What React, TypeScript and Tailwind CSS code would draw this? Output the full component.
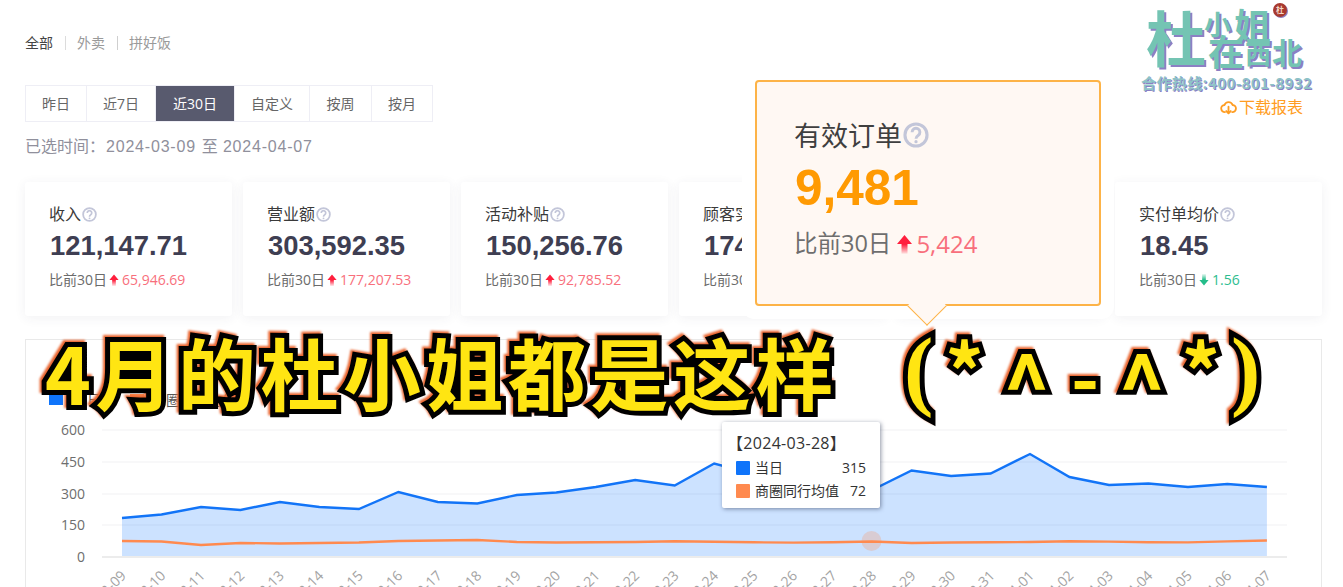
import React from "react";

const F = "font-['Open_Sans','Noto_Sans_CJK_SC',sans-serif]";

function Help({ className }: { className: string }) {
  return (
    <svg viewBox="0 0 16 16" className={className} fill="none" stroke="#c3c6d9" strokeWidth="1.9">
      <circle cx="8" cy="8" r="6.8" />
      <path d="M5.6 6.3a2.4 2.4 0 1 1 3.7 2c-.9.6-1.3 1-1.3 2" strokeWidth="1.8" />
      <circle cx="8" cy="12.1" r="1" fill="#c3c6d9" stroke="none" />
    </svg>
  );
}

function Arrow({ up, className }: { up: boolean; className: string }) {
  const id = up ? "arrowUp" : "arrowDown";
  const color = up ? "#ff1f3d" : "#25bd8a";
  return (
    <svg viewBox="0 0 10 13" className={className}>
      <defs>
        <linearGradient id={id} x1="0" y1={up ? "0" : "1"} x2="0" y2={up ? "1" : "0"}>
          <stop offset="0.5" stopColor={color} />
          <stop offset="1" stopColor={color} stopOpacity="0.1" />
        </linearGradient>
      </defs>
      <path d={up ? "M5 0.5 10 6.5H7V13H3V6.5H0Z" : "M5 12.5 10 6.5H7V0H3V6.5H0Z"} fill={`url(#${id})`} />
    </svg>
  );
}

type CardData = { title: string; value: string; diff: string; up: boolean };
const cards: CardData[] = [
  { title: "收入", value: "121,147.71", diff: "65,946.69", up: true },
  { title: "营业额", value: "303,592.35", diff: "177,207.53", up: true },
  { title: "活动补贴", value: "150,256.76", diff: "92,785.52", up: true },
  { title: "顾客实付", value: "174,335.59", diff: "84,421.01", up: true },
  { title: "有效订单", value: "9,481", diff: "5,424", up: true },
  { title: "实付单均价", value: "18.45", diff: "1.56", up: false },
];

function Card({ c }: { c: CardData }) {
  return (
    <div className="h-[134px] w-[207px] shrink-0 rounded-[3px] bg-white pl-[24px] pt-[20px] shadow-[0_2px_12px_rgba(60,60,90,0.07)]">
      <div className="flex h-[24px] items-center text-[16px] leading-none text-[#3a3a3a]">
        {c.title}
        <Help className="ml-px h-[15px] w-[15px]" />
      </div>
      <div className="ml-px mt-[2px] h-[36px] font-['Liberation_Sans',sans-serif] text-[27.4px] font-bold leading-[36px] text-[#3e3e52]">
        {c.value}
      </div>
      <div className="mt-[6px] flex h-[20px] items-center text-[14px] leading-none text-[#6b6b6b]">
        比前30日
        <Arrow up={c.up} className="ml-[2px] mr-[3px] h-[12px] w-[10px]" />
        <span className={c.up ? "text-[#f86f7c]" : "text-[#2dbd8f]"}>{c.diff}</span>
      </div>
    </div>
  );
}

const dates = [
  ...Array.from({ length: 23 }, (_, i) => `2024-03-${String(i + 9).padStart(2, "0")}`),
  ...Array.from({ length: 7 }, (_, i) => `2024-04-0${i + 1}`),
];
const xs = dates.map((_, i) => 122 + i * 39.48);
const blue = [518, 514.5, 507, 510, 502, 507, 509, 492, 502, 503.5, 495, 492.5, 487, 480, 485.5, 463.5, 474, 478, 484, 490, 470.5, 476, 473.5, 454, 477, 485, 483.5, 487, 484, 487];
const orange = [541, 541.5, 545, 543, 543.5, 543, 542.5, 541, 540.5, 540, 542, 542.5, 542.3, 542, 541.2, 541.8, 542.3, 542.6, 542.2, 541.5, 543, 542.5, 542.3, 542, 541.3, 541.6, 542.2, 542.4, 541.4, 540.5];
const pts = (ys: number[]) => ys.map((y, i) => `${xs[i].toFixed(1)},${y}`).join(" ");

function Chart() {
  const grid = [430, 462, 494, 525];
  const labels: [string, number][] = [["600", 430], ["450", 462], ["300", 494], ["150", 525], ["0", 557]];
  return (
    <svg viewBox="26 415 1295 190" className="mt-[7px] block h-[190px] w-[1295px]">
      {grid.map((y) => (
        <line key={y} x1="102" x2="1287" y1={y} y2={y} stroke="#f1f1f3" strokeWidth="1" />
      ))}
      <line x1="102" x2="1287" y1="557" y2="557" stroke="#e6e6e6" strokeWidth="1.5" />
      {labels.map(([t, y]) => (
        <text key={t} x="85" y={y + 5} textAnchor="end" fontSize="14" fill="#6e6e6e" fontFamily="'Open Sans',sans-serif">{t}</text>
      ))}
      <polygon points={`122,556 ${pts(blue)} ${xs[29].toFixed(1)},556`} fill="#0070ff" fillOpacity="0.2" />
      <polyline points={pts(blue)} fill="none" stroke="#1274f7" strokeWidth="2.4" />
      <polyline points={pts(orange)} fill="none" stroke="#ff8a4f" strokeWidth="2.4" />
      <circle cx="871.5" cy="541" r="10" fill="#ff8a4f" fillOpacity="0.25" />
      {dates.map((d, i) => (
        <text key={d} x={xs[i] + 5} y="576.5" textAnchor="end" fontSize="14" fill="#a3a3a3" fontFamily="'Open Sans',sans-serif" transform={`rotate(-45 ${xs[i] + 5} 576.5)`}>{d}</text>
      ))}
    </svg>
  );
}

const ranges = [
  ["昨日", "w-[61px]"],
  ["近7日", "w-[69px]"],
  ["近30日", "w-[79px]"],
  ["自定义", "w-[75px]"],
  ["按周", "w-[62px]"],
  ["按月", "w-[60px]"],
];

const logoChar = "absolute font-['Noto_Sans_CJK_SC',sans-serif] font-bold leading-none text-[#74c4b3] [text-shadow:2px_2px_0_#8c80c4]";
const bigText = "font-bold leading-none text-[#ffe512] [-webkit-text-stroke:10px_#000] [paint-order:stroke_fill]";

export default function App() {
  return (
    <div className={`relative h-[587px] w-[1343px] overflow-hidden bg-white pl-[25px] pr-[21px] pt-[33px] ${F}`}>
      {/* channel tabs */}
      <div className="flex h-[20px] items-center text-[14px] leading-none">
        <span className="text-[#444]">全部</span>
        <span className="ml-[12px] mr-[11px] h-[14px] w-px bg-[#dcdcdc]" />
        <span className="text-[#9a9a9a]">外卖</span>
        <span className="ml-[12px] mr-[11px] h-[14px] w-px bg-[#cfcfcf]" />
        <span className="text-[#9a9a9a]">拼好饭</span>
      </div>

      {/* range buttons */}
      <div className="mt-[32px] flex h-[37px] w-[408px] border border-[#eeeef5] text-[14px]">
        {ranges.map(([t, w]) => (
          <div
            key={t}
            className={`flex shrink-0 items-center justify-center border-r border-[#eeeef5] last:border-r-0 ${w} ${t === "近30日" ? "bg-[#585a6e] text-white" : "text-[#666]"}`}
          >
            {t}
          </div>
        ))}
      </div>

      <div className="mt-[13px] flex h-[24px] items-center whitespace-pre font-['Liberation_Sans','Noto_Sans_CJK_SC',sans-serif] text-[16px] leading-[24px] text-[#90909c]">
        已选时间：
        <span className="ml-px tracking-[0.8px]">2024-03-09</span>
        <span className="ml-[6px] mr-[5px]">至</span>
        <span className="tracking-[0.8px]">2024-04-07</span>
      </div>

      {/* stat cards */}
      <div className="mt-[23px] flex gap-[11px]">
        {cards.map((c) => (
          <Card key={c.title} c={c} />
        ))}
      </div>

      {/* chart panel */}
      <div className="mt-[23px] h-[300px] border border-[#e9e9e9] pt-[50px]">
        <div className="ml-[23px] flex h-[18px] items-center text-[14px] text-[#555]">
          <span className="h-[11px] w-[14px] bg-[#0f74fa]" />
          <span className="ml-[10px]">当日</span>
          <span className="ml-[29px] h-[11px] w-[14px] bg-[#ff8a4f]" />
          <span className="ml-[8px]">商圈同行均值</span>
        </div>
        <Chart />
      </div>

      {/* logo */}
      <div className="absolute left-[1140px] top-0 h-[92px] w-[180px]">
        <span className={`${logoChar} left-[6px] top-[6px] text-[60px]`}>杜</span>
        <span className={`${logoChar} left-[64px] top-[10px] text-[27px]`}>小</span>
        <span className={`${logoChar} left-[94px] top-[7px] text-[37px]`}>姐</span>
        <span className={`${logoChar} left-[68px] top-[32px] text-[36px]`}>在</span>
        <span className={`${logoChar} left-[105px] top-[40px] text-[26px]`}>西</span>
        <span className={`${logoChar} left-[132px] top-[36px] text-[30px]`}>北</span>
        <span className="absolute left-[133px] top-[3px] flex h-[14px] w-[14px] items-center justify-center rounded-full bg-[#a8392f] text-[8px] font-bold leading-none text-[#f4d9c8] shadow-[1px_1px_0_#8c80c4]">杜</span>
        <span className="absolute left-[1px] top-[74px] whitespace-nowrap font-['Noto_Sans_CJK_SC',sans-serif] text-[15px] font-bold leading-[18px] tracking-[0.4px] text-[#8ec3c7] [text-shadow:1px_1px_0_#8c80c4]">合作热线:400-801-8932</span>
      </div>

      {/* download */}
      <div className="absolute left-[1220px] top-[97px] flex h-[20px] items-center text-[16px] leading-none text-[#ff9d22]">
        <svg viewBox="0 0 24 24" className="mr-[2px] h-[17px] w-[17px]" fill="none" stroke="#ff9d22" strokeWidth="2.6" strokeLinecap="round" strokeLinejoin="round">
          <path d="M7 18.5a5 5 0 0 1-.6-10 6 6 0 0 1 11.4 0 5 5 0 0 1-.6 10" />
          <path d="M12 11v9M8.8 17l3.2 3.3 3.2-3.3" />
        </svg>
        下载报表
      </div>

      {/* hovered card popup */}
      <div className="absolute left-[755px] top-[80px] h-[226px] w-[346px] rounded-[4px] border-2 border-[#fdb347] bg-[#fff8f3] pl-[37px] pt-[33px] shadow-[0_0_0_13px_#ffffff]">
        <div className="flex h-[40px] items-center text-[27px] leading-none text-[#3f3f3f]">
          有效订单
          <Help className="ml-px h-[26px] w-[26px]" />
        </div>
        <div className="ml-px mt-[5px] h-[56px] font-['Liberation_Sans',sans-serif] text-[49.5px] font-bold leading-[56px] text-[#ff9a02]">9,481</div>
        <div className="mt-[11px] flex h-[34px] items-center text-[23.5px] leading-none text-[#6e6e6e]">
          比前30日
          <Arrow up className="ml-[6px] mr-[4px] h-[20px] w-[15px]" />
          <span className="text-[24px] text-[#f86f7c]">5,424</span>
        </div>
        <span className="absolute bottom-[-16px] left-[156px] h-[28px] w-[28px] rotate-45 border-b-[1.5px] border-r-[1.5px] border-[#fdb347] bg-[#fff8f3]" />
      </div>

      {/* chart tooltip */}
      <div className="absolute left-[722px] top-[422px] h-[86px] w-[158px] rounded-[2px] bg-white px-[8px] pt-[9px] text-[#333] shadow-[1px_1px_4px_rgba(50,60,90,0.55)]">
        <div className="-ml-[3px] h-[24px] whitespace-nowrap text-[16px] leading-[24px] tracking-[0.3px]">【2024-03-28】</div>
        <div className="mt-px flex h-[23px] items-center pl-[6px] pr-[6px] text-[14px]">
          <span className="h-[14px] w-[14px] rounded-[1px] bg-[#0f74fa]" />
          <span className="ml-[5px]">当日</span>
          <span className="ml-auto">315</span>
        </div>
        <div className="flex h-[23px] items-center pl-[6px] pr-[6px] text-[14px]">
          <span className="h-[14px] w-[14px] shrink-0 rounded-[1px] bg-[#ff8a4f]" />
          <span className="ml-[5px] whitespace-nowrap">商圈同行均值</span>
          <span className="ml-auto">72</span>
        </div>
      </div>

      {/* video caption */}
      <div className="absolute left-[45px] top-[330px] flex items-start whitespace-nowrap [filter:drop-shadow(-2px_-2px_1px_#e9642e)]">
        <span className={`${bigText} font-['Noto_Sans_CJK_SC',serif] mt-[2px] text-[78px] tracking-[4.5px]`}>4月的杜小姐都是这样</span>
        <span className={`${bigText} ml-[66px] -mt-[4px] font-['Liberation_Serif',serif] text-[88px]`}>(</span>
        <span className={`${bigText} ml-[12px] font-['Noto_Sans_CJK_SC',serif] text-[76px]`}>*</span>
        <span className={`${bigText} ml-[19px] mt-[10px] font-['Noto_Sans_CJK_SC',serif] text-[80px]`}>^</span>
        <span className={`${bigText} ml-[21px] mt-[6px] font-['Noto_Sans_CJK_SC',serif] text-[76px]`}>-</span>
        <span className={`${bigText} ml-[19px] mt-[10px] font-['Noto_Sans_CJK_SC',serif] text-[80px]`}>^</span>
        <span className={`${bigText} ml-[16px] font-['Noto_Sans_CJK_SC',serif] text-[76px]`}>*</span>
        <span className={`${bigText} ml-[11px] -mt-[4px] font-['Liberation_Serif',serif] text-[88px]`}>)</span>
      </div>
    </div>
  );
}
